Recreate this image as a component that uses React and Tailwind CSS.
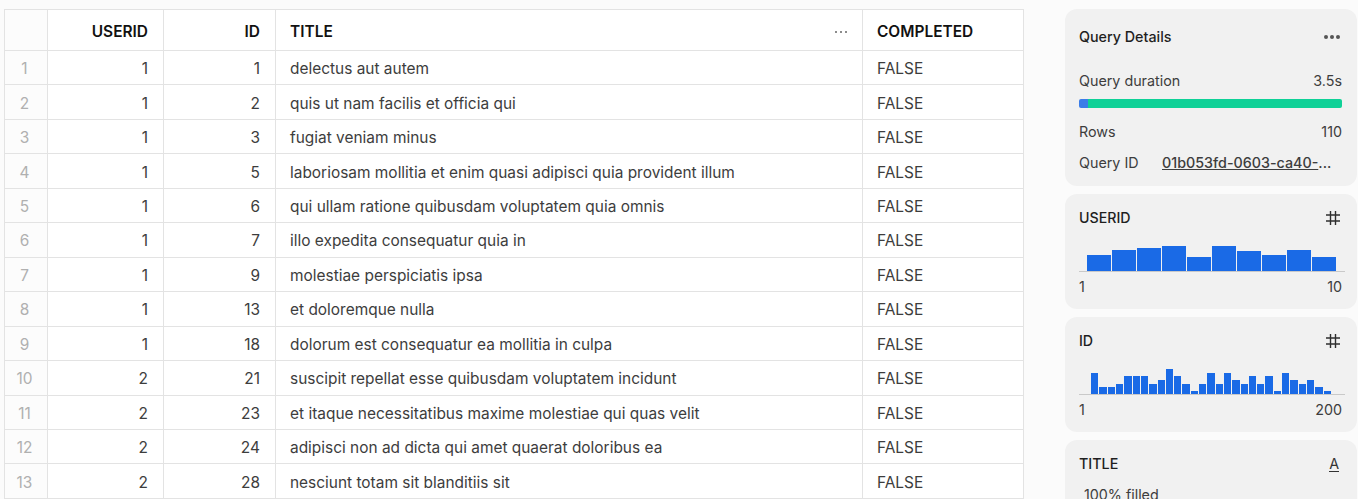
const rows = [
  [1, 1, 1, 'delectus aut autem'],
  [2, 1, 2, 'quis ut nam facilis et officia qui'],
  [3, 1, 3, 'fugiat veniam minus'],
  [4, 1, 5, 'laboriosam mollitia et enim quasi adipisci quia provident illum'],
  [5, 1, 6, 'qui ullam ratione quibusdam voluptatem quia omnis'],
  [6, 1, 7, 'illo expedita consequatur quia in'],
  [7, 1, 9, 'molestiae perspiciatis ipsa'],
  [8, 1, 13, 'et doloremque nulla'],
  [9, 1, 18, 'dolorum est consequatur ea mollitia in culpa'],
  [10, 2, 21, 'suscipit repellat esse quibusdam voluptatem incidunt'],
  [11, 2, 23, 'et itaque necessitatibus maxime molestiae qui quas velit'],
  [12, 2, 24, 'adipisci non ad dicta qui amet quaerat doloribus ea'],
  [13, 2, 28, 'nesciunt totam sit blanditiis sit'],
]

const useridBars = [16, 21, 23, 25, 14, 25, 20, 16, 21, 14]
const idBars = [21, 7, 7, 10, 18, 18, 18, 10, 14, 25, 18, 10, 3, 10, 21, 10, 21, 14, 10, 18, 10, 18, 3, 21, 14, 10, 14, 7, 3]

function HashIcon() {
  return (
    <svg className="w-[16px] h-[16px] mr-[4px] text-[#2e2e2e]" viewBox="0 0 16 16" fill="none" stroke="currentColor" strokeWidth="1.4">
      <path d="M1 5h14M1 11h14M5.5 1v14M10.5 1v14" />
    </svg>
  )
}

function Histogram({ bars, barClass, min, max }) {
  return (
    <div>
      <div className="flex items-end justify-center gap-[1px] h-[30px] pr-[2px] border-b border-[#c9c9c9]">
        {bars.map((h, i) => (
          <div key={i} className={`bg-[#1a6ae6] ${barClass}`} style={{ height: h }} />
        ))}
      </div>
      <div className="flex justify-between mt-[6px] pr-[3px] text-[14.3px] leading-[18px] text-[#3d3d3d]">
        <span>{min}</span>
        <span>{max}</span>
      </div>
    </div>
  )
}

function ColumnCard({ name, bars, barClass, min, max }) {
  return (
    <div className="h-[115px] shrink-0 rounded-xl bg-[#f1f1f1] pl-[14px] pr-[12px] pt-[14px]">
      <div className="flex items-center justify-between h-[20px] text-[14.2px] font-[450] text-[#1f1f1f]">
        {name}
        <HashIcon />
      </div>
      <div className="mt-[14px]">
        <Histogram bars={bars} barClass={barClass} min={min} max={max} />
      </div>
    </div>
  )
}

export default function App() {
  return (
    <div className="flex h-[499px] overflow-hidden bg-[#fbfbfb] pt-[9px] pl-[4px] font-['Inter',sans-serif] text-[15.45px] text-[#3d3d3d]">
      {/* Table */}
      <div className="w-[1020px] shrink-0 border-t border-l border-r border-[#e3e3e3] bg-white self-start">
        <div className="grid grid-cols-[43px_116px_112px_587px_1fr] h-[41px] border-b border-[#e3e3e3] font-semibold text-[#111]">
          <div className="border-r border-[#e3e3e3] bg-[#fcfcfc]" />
          <div className="flex items-center justify-end pt-[3px] pr-[15px] border-r border-[#e3e3e3]">USERID</div>
          <div className="flex items-center justify-end pt-[3px] pr-[15px] border-r border-[#e3e3e3]">ID</div>
          <div className="flex items-center justify-between pt-[3px] pl-[14px] pr-[15px] border-r border-[#e3e3e3]">
            TITLE
            <span className="flex gap-[3px]">
              <span className="w-[2px] h-[2px] rounded-full bg-[#666]" />
              <span className="w-[2px] h-[2px] rounded-full bg-[#666]" />
              <span className="w-[2px] h-[2px] rounded-full bg-[#666]" />
            </span>
          </div>
          <div className="flex items-center pt-[3px] pl-[14px]">COMPLETED</div>
        </div>
        {rows.map(([n, userid, id, title]) => (
          <div key={n} className="grid grid-cols-[43px_116px_112px_587px_1fr] h-[34.46px] border-b border-[#e3e3e3]">
            <div className="flex items-center justify-center pt-[2px] pr-[3px] border-r border-[#e3e3e3] text-[#b0b0b0] bg-[#fcfcfc]">{n}</div>
            <div className="flex items-center justify-end pt-[2px] pr-[15px] border-r border-[#e3e3e3]">{userid}</div>
            <div className="flex items-center justify-end pt-[2px] pr-[15px] border-r border-[#e3e3e3]">{id}</div>
            <div className="flex items-center pt-[2px] pl-[14px] border-r border-[#e3e3e3]">{title}</div>
            <div className="flex items-center pt-[2px] pl-[14px]">FALSE</div>
          </div>
        ))}
      </div>

      {/* Sidebar */}
      <div className="ml-[41px] w-[292px] shrink-0 flex flex-col gap-[8px]">
        <div className="h-[177px] shrink-0 rounded-xl bg-[#f1f1f1] pl-[14px] pr-[15px] pt-[18px] text-[14.3px] text-[#3d3d3d]">
          <div className="flex items-center justify-between h-[20px] font-[450] text-[#1f1f1f]">
            Query Details
            <span className="flex gap-[2px] mr-[2px]">
              <span className="w-[4px] h-[4px] rounded-full bg-[#555]" />
              <span className="w-[4px] h-[4px] rounded-full bg-[#555]" />
              <span className="w-[4px] h-[4px] rounded-full bg-[#555]" />
            </span>
          </div>
          <div className="flex justify-between mt-[24px] leading-[20px]">
            <span>Query duration</span>
            <span>3.5s</span>
          </div>
          <div className="flex h-[9px] mt-[8px] rounded-[2px] overflow-hidden">
            <div className="w-[9px] bg-[#3b7de8]" />
            <div className="flex-1 bg-[#0fd197]" />
          </div>
          <div className="flex justify-between mt-[14px] leading-[20px]">
            <span>Rows</span>
            <span>110</span>
          </div>
          <div className="flex mt-[11px] leading-[20px] whitespace-nowrap">
            <span className="w-[83px] shrink-0">Query ID</span>
            <span className="font-medium">
              <span className="underline">01b053fd-0603-ca40-</span>...
            </span>
          </div>
        </div>

        <ColumnCard name="USERID" bars={useridBars} barClass="w-[24px]" min="1" max="10" />
        <ColumnCard name="ID" bars={idBars} barClass="w-[7.3px]" min="1" max="200" />

        <div className="h-[115px] shrink-0 rounded-xl bg-[#f1f1f1] px-[14px] pt-[14px] text-[14.3px]">
          <div className="flex items-center justify-between h-[20px] font-[450] text-[#1f1f1f]">
            TITLE
            <span className="mr-[4px] border-b border-[#333] leading-[15px] text-[#333] font-normal">A</span>
          </div>
          <div className="mt-[11px] pl-[5px] leading-[20px] text-[#3d3d3d]">100% filled</div>
        </div>
      </div>
    </div>
  )
}
